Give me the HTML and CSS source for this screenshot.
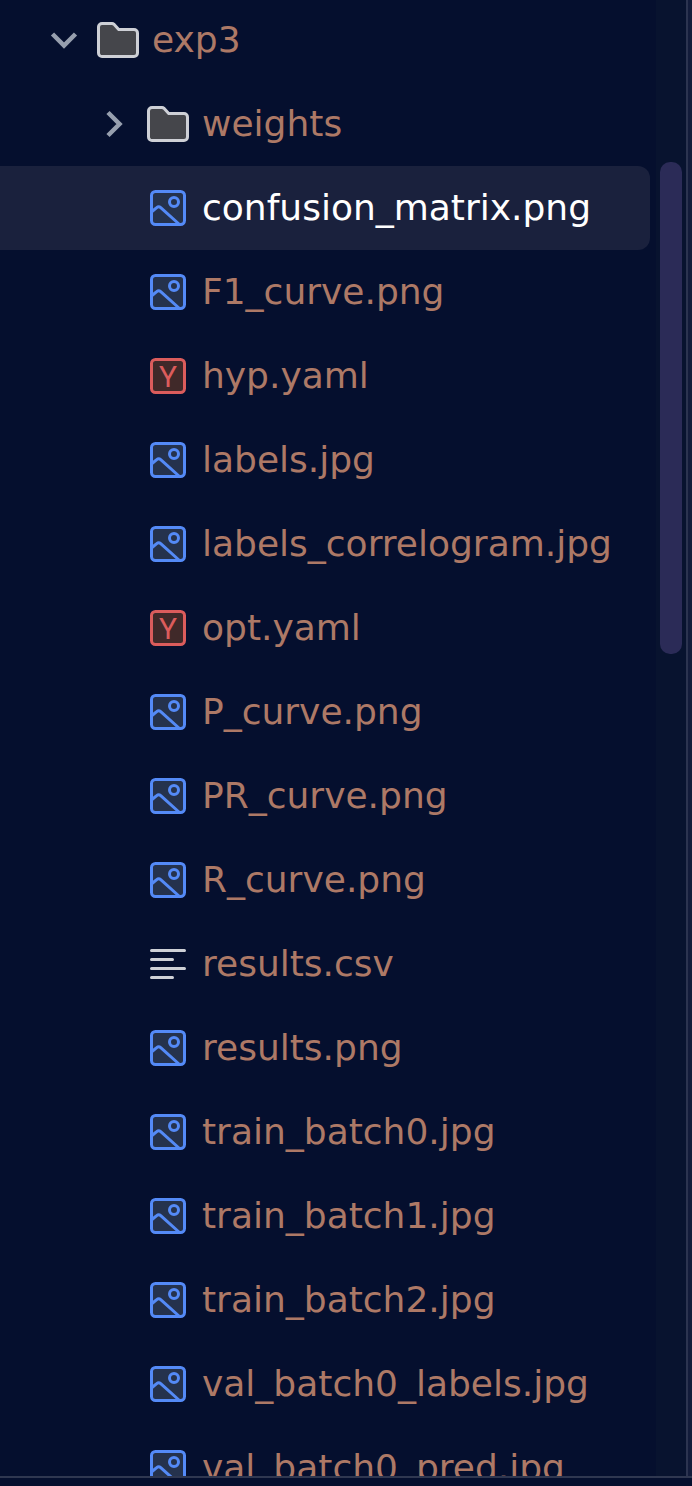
FILE: index.html
```html
<!DOCTYPE html>
<html lang="en">
<head>
<meta charset="utf-8">
<meta name="viewport" content="width=device-width, initial-scale=1">
<title>Project files</title>
<link rel="stylesheet" href="styles.css">
</head>
<body>
<svg class="sprite" aria-hidden="true">
  <symbol id="chevron-down" viewBox="0 0 48 48"><path class="chevron" d="M12.500 18 24 29.500 35.500 18"/></symbol>
  <symbol id="chevron-right" viewBox="0 0 48 48"><path class="chevron" d="M18 12.500 29.500 24 18 35.500"/></symbol>
  <symbol id="folder" viewBox="0 0 48 48"><path class="folder" d="M4.500 11a3.500 3.500 0 0 1 3.500-3.500h10a3 3 0 0 1 2 .8l4.700 5.200h15.300a3.500 3.500 0 0 1 3.500 3.500v20a3.500 3.500 0 0 1-3.500 3.500h-32a3.500 3.500 0 0 1-3.500-3.500z"/></symbol>
  <symbol id="image" viewBox="0 0 48 48">
    <rect class="image fill" x="7.500" y="7.500" width="33" height="33" rx="4"/>
    <circle class="image" cx="30" cy="18" r="4.500"/>
    <path class="image" d="M8 27.500 12.700 23.600a3 3 0 0 1 4 0L35.500 40.500"/>
  </symbol>
  <symbol id="yaml" viewBox="0 0 48 48">
    <rect class="yaml" x="7.500" y="7.500" width="33" height="33" rx="4"/>
    <text class="yaml-letter" x="24" y="35" text-anchor="middle">Y</text>
  </symbol>
  <symbol id="text" viewBox="0 0 48 48"><path class="lines" d="M7.500 10.500h33M7.500 19.500h21M7.500 28.500h33M7.500 37.500h21"/></symbol>
</svg>
<main class="panel">
  <nav class="files" aria-label="Project files">
    <ul class="tree">
      <li><button class="row" aria-expanded="true"><svg class="icon"><use href="#chevron-down"/></svg><svg class="icon"><use href="#folder"/></svg><span class="name">exp3</span></button></li>
      <li><button class="row child" aria-expanded="false"><svg class="icon"><use href="#chevron-right"/></svg><svg class="icon"><use href="#folder"/></svg><span class="name">weights</span></button></li>
      <li><button class="row file selected" aria-current="true"><svg class="icon"><use href="#image"/></svg><span class="name">confusion_matrix.png</span></button></li>
      <li><button class="row file"><svg class="icon"><use href="#image"/></svg><span class="name">F1_curve.png</span></button></li>
      <li><button class="row file"><svg class="icon"><use href="#yaml"/></svg><span class="name">hyp.yaml</span></button></li>
      <li><button class="row file"><svg class="icon"><use href="#image"/></svg><span class="name">labels.jpg</span></button></li>
      <li><button class="row file"><svg class="icon"><use href="#image"/></svg><span class="name">labels_correlogram.jpg</span></button></li>
      <li><button class="row file"><svg class="icon"><use href="#yaml"/></svg><span class="name">opt.yaml</span></button></li>
      <li><button class="row file"><svg class="icon"><use href="#image"/></svg><span class="name">P_curve.png</span></button></li>
      <li><button class="row file"><svg class="icon"><use href="#image"/></svg><span class="name">PR_curve.png</span></button></li>
      <li><button class="row file"><svg class="icon"><use href="#image"/></svg><span class="name">R_curve.png</span></button></li>
      <li><button class="row file"><svg class="icon"><use href="#text"/></svg><span class="name">results.csv</span></button></li>
      <li><button class="row file"><svg class="icon"><use href="#image"/></svg><span class="name">results.png</span></button></li>
      <li><button class="row file"><svg class="icon"><use href="#image"/></svg><span class="name">train_batch0.jpg</span></button></li>
      <li><button class="row file"><svg class="icon"><use href="#image"/></svg><span class="name">train_batch1.jpg</span></button></li>
      <li><button class="row file"><svg class="icon"><use href="#image"/></svg><span class="name">train_batch2.jpg</span></button></li>
      <li><button class="row file"><svg class="icon"><use href="#image"/></svg><span class="name">val_batch0_labels.jpg</span></button></li>
      <li><button class="row file"><svg class="icon"><use href="#image"/></svg><span class="name">val_batch0_pred.jpg</span></button></li>
    </ul>
  </nav>
  <div class="scrollbar"><div class="thumb"></div></div>
  <div class="editor-edge"></div>
</main>
<footer class="bottom-bar"></footer>
</body>
</html>
```

FILE: styles.css
```css
* {
  box-sizing: border-box;
}

body {
  display: flex;
  flex-direction: column;
  height: 100vh;
  margin: 0;
  overflow: hidden;
  background: #050f2e;
  color: #ad7966;
  font-family: "DejaVu Sans", sans-serif;
  font-size: 36px;
}

.sprite {
  position: absolute;
  width: 0;
  height: 0;
}

.panel {
  display: flex;
  flex: 1;
  min-height: 0;
}

.files {
  flex: 1;
  min-width: 0;
  overflow: hidden;
  padding-right: 6px;
}

/* The list is scrolled slightly past its first row. */
.tree {
  margin: -2px 0 0;
  padding: 0;
  list-style: none;
}

.row {
  display: flex;
  align-items: center;
  gap: 6px;
  width: 100%;
  height: 84px;
  padding: 0 0 0 40px;
  border: 0;
  border-radius: 0 12px 12px 0;
  background: none;
  color: inherit;
  font: inherit;
  text-align: left;
  white-space: nowrap;
}

.child {
  padding-left: 90px;
}

.file {
  padding-left: 144px;
}

.selected {
  background: #1a213d;
  color: #fff;
}

.icon {
  flex: none;
  width: 48px;
  height: 48px;
}

.name {
  padding-left: 4px;
  line-height: 42px;
}

.scrollbar {
  width: 30px;
  padding: 162px 4px 0;
  background: #08132f;
}

.thumb {
  height: 492px;
  border-radius: 10px;
  background: #2b2b57;
}

.editor-edge {
  width: 6px;
  border-left: 2px solid #2c3450;
  background: #131c3b;
}

.bottom-bar {
  height: 10px;
  border-top: 2px solid #2f3750;
}

.chevron {
  fill: none;
  stroke: #979fae;
  stroke-width: 4.5;
}

.folder {
  fill: #45464b;
  stroke: #ced0d6;
  stroke-width: 3;
}

.image {
  fill: none;
  stroke: #548af7;
  stroke-width: 3;
}

.image.fill {
  fill: #25324d;
}

.yaml {
  fill: #402929;
  stroke: #db5c5c;
  stroke-width: 3;
}

.yaml-letter {
  fill: #db5c5c;
  font-family: Roboto, sans-serif;
  font-size: 30px;
  font-weight: 400;
}

.lines {
  fill: none;
  stroke: #ced0d6;
  stroke-width: 3;
  stroke-linecap: round;
}
```
